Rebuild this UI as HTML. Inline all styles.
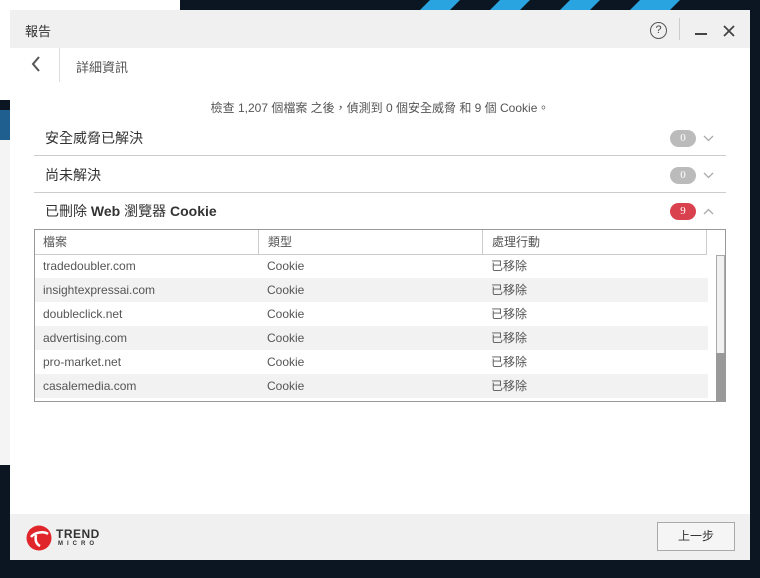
<!DOCTYPE html>
<html><head><meta charset="utf-8"><style>
*{margin:0;padding:0;box-sizing:border-box}
body{width:760px;height:578px;overflow:hidden;background:#0b1622;position:relative;font-family:"Liberation Sans","Noto Sans CJK TC",sans-serif;color:#444}
.abs{position:absolute}
.win{left:10px;top:10px;width:740px;height:550px;background:#fff}
.title{left:0;top:0;width:740px;height:38px;background:#f0f0f0}
.sec{left:24px;width:692px;height:36px;border-bottom:1px solid #ccc;font-size:14px;color:#333;line-height:36px;padding-left:11px}
.badge{position:absolute;right:30px;top:10px;width:26px;height:17px;border-radius:9px;background:#bbb;color:#fff;font-size:11px;line-height:17px;text-align:center;font-family:"Liberation Serif",serif}
.chev{position:absolute;right:12px;top:15px}
.tbl{left:24px;top:219px;width:692px;height:173px;border:1px solid #999}
.row{position:absolute;left:0;width:673px;height:24px;font-size:12px;line-height:24px;color:#555}
.row span{position:absolute;top:0}
</style></head><body>
<div class="abs" style="left:0;top:0;width:180px;height:10px;background:#fff"></div>
<div class="abs" style="left:0;top:0;width:10px;height:100px;background:#fff"></div>
<div class="abs" style="left:0;top:110px;width:10px;height:30px;background:#1f5f8f"></div>
<div class="abs" style="left:0;top:140px;width:10px;height:325px;background:#f4f4f4"></div>
<svg class="abs" style="left:380px;top:0" width="380" height="10"><polygon points="40,10 50,0 80,0 70,10" fill="#2aa4e0"/><polygon points="110,10 120,0 150,0 140,10" fill="#2aa4e0"/><polygon points="180,10 190,0 220,0 210,10" fill="#2aa4e0"/><polygon points="250,10 260,0 300,0 290,10" fill="#2aa4e0"/></svg>
<div class="abs win">
 <div class="abs title">
  <div class="abs" style="left:15px;top:11px;font-size:13px;color:#333">報告</div>
  <div class="abs" style="left:640px;top:12px;width:17px;height:17px;border:1.5px solid #555;border-radius:50%;font-size:11px;text-align:center;line-height:14px;color:#444">?</div>
  <div class="abs" style="left:669px;top:8px;width:1px;height:22px;background:#ccc"></div>
  <div class="abs" style="left:685px;top:23px;width:12px;height:2px;background:#444"></div>
  <svg class="abs" style="left:713px;top:15px" width="12" height="12"><path d="M1 1L11 11M11 1L1 11" stroke="#444" stroke-width="1.8"/></svg>
 </div>
 <svg class="abs" style="left:20px;top:46px" width="12" height="16"><path d="M9 1L3 8L9 15" stroke="#555" stroke-width="2" fill="none"/></svg>
 <div class="abs" style="left:49px;top:38px;width:1px;height:34px;background:#ddd"></div>
 <div class="abs" style="left:66px;top:47px;font-size:13px;color:#555">詳細資訊</div>
 <div class="abs" style="left:0;top:89px;width:740px;text-align:center;font-size:12px;color:#555">檢查 1,207 個檔案 之後，偵測到 0 個安全威脅 和 9 個 Cookie。</div>
 <div class="abs sec" style="top:110px">安全威脅已解決<div class="badge">0</div><svg class="chev" width="11" height="7"><path d="M1 1L5.5 5.5L10 1" stroke="#aaa" stroke-width="1.3" fill="none"/></svg></div>
 <div class="abs sec" style="top:147px">尚未解決<div class="badge">0</div><svg class="chev" width="11" height="7"><path d="M1 1L5.5 5.5L10 1" stroke="#aaa" stroke-width="1.3" fill="none"/></svg></div>
 <div class="abs sec" style="top:183px;border:none">已刪除 <span style="font-weight:600">Web</span> 瀏覽器 <span style="font-weight:600">Cookie</span><div class="badge" style="background:#d9414e">9</div><svg class="chev" width="11" height="7"><path d="M1 6L5.5 1.5L10 6" stroke="#aaa" stroke-width="1.3" fill="none"/></svg></div>
 <div class="abs tbl">
  <div class="row" style="top:0;border-bottom:1px solid #ccc;height:25px;width:672px;border-right:1px solid #ccc"><span style="left:8px">檔案</span><span style="left:223px;height:24px;border-left:1px solid #ccc;padding-left:9px">類型</span><span style="left:447px;height:24px;border-left:1px solid #ccc;padding-left:9px">處理行動</span></div>
  <div class="row" style="top:24px"><span style="left:8px">tradedoubler.com</span><span style="left:232px">Cookie</span><span style="left:456px">已移除</span></div>
  <div class="row" style="top:48px;background:#f2f2f2"><span style="left:8px">insightexpressai.com</span><span style="left:232px">Cookie</span><span style="left:456px">已移除</span></div>
  <div class="row" style="top:72px"><span style="left:8px">doubleclick.net</span><span style="left:232px">Cookie</span><span style="left:456px">已移除</span></div>
  <div class="row" style="top:96px;background:#f2f2f2"><span style="left:8px">advertising.com</span><span style="left:232px">Cookie</span><span style="left:456px">已移除</span></div>
  <div class="row" style="top:120px"><span style="left:8px">pro-market.net</span><span style="left:232px">Cookie</span><span style="left:456px">已移除</span></div>
  <div class="row" style="top:144px;background:#f2f2f2"><span style="left:8px">casalemedia.com</span><span style="left:232px">Cookie</span><span style="left:456px">已移除</span></div>
  <div class="abs" style="left:681px;top:25px;width:9px;height:146px;border:1px solid #aaa;background:#f2f2f2"></div>
  <div class="abs" style="left:681px;top:123px;width:9px;height:48px;background:#999"></div>
 </div>
 <div class="abs" style="left:0;top:504px;width:740px;height:46px;background:#f0f0f0">
  <svg class="abs" style="left:16px;top:11px" width="26" height="26"><circle cx="13" cy="13" r="12.5" fill="#e0262b"/><path d="M5 12C9 7 18 6 22 9M10 10C9 15 10 19 14 21" stroke="#fff" stroke-width="2.5" fill="none"/></svg>
  <div class="abs" style="left:46px;top:13px;font-size:12px;font-weight:bold;color:#333;letter-spacing:0.5px">TREND</div>
  <div class="abs" style="left:48px;top:27px;font-size:6px;font-weight:bold;color:#333;letter-spacing:4px">MICRO</div>
  <div class="abs" style="left:647px;top:8px;width:78px;height:29px;border:1px solid #aaa;background:#f5f5f5;text-align:center;line-height:27px;font-size:12px;color:#333">上一步</div>
 </div>
</div>
</body></html>
